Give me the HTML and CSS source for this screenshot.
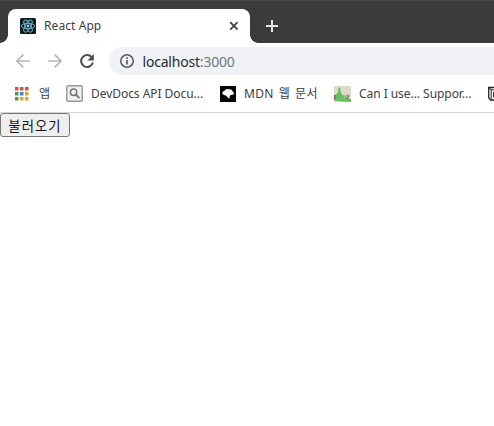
FILE: index.html
```html
<!DOCTYPE html>
<html lang="ko">
<head>
<meta charset="utf-8">
<title>React App</title>
<link rel="stylesheet" href="styles.css">
</head>
<body>
<header class="tabs">
  <div class="tab">
    <svg class="favicon" width="16" height="16" viewBox="0 0 16 16"><rect width="16" height="16" rx="1.5" fill="#101820"/><g fill="none" stroke="#72b9d2" stroke-width=".9"><ellipse cx="8" cy="8" rx="6.8" ry="2.7"/><ellipse cx="8" cy="8" rx="6.8" ry="2.7" transform="rotate(60 8 8)"/><ellipse cx="8" cy="8" rx="6.8" ry="2.7" transform="rotate(120 8 8)"/></g><circle cx="8" cy="8" r="1.4" fill="#8cd0e5"/></svg>
    <span class="tab-title">React App</span>
    <svg class="close" width="10" height="10" viewBox="0 0 10 10"><path d="M1.2 1.2l7.4 7.4M8.6 1.2L1.2 8.6" stroke="#3c4043" stroke-width="1.7"/></svg>
  </div>
  <svg class="plus" width="14" height="14" viewBox="0 0 14 14"><path d="M7 1v12M1 7h12" stroke="#e8e8e8" stroke-width="2"/></svg>
</header>
<nav class="toolbar">
  <svg width="16" height="16" viewBox="0 0 16 16"><path d="M15 8H2M8.3 1.6L1.9 8l6.4 6.4" fill="none" stroke="#b5b6b8" stroke-width="1.7"/></svg>
  <svg width="16" height="16" viewBox="0 0 16 16"><path d="M1 8h13M7.7 1.6L14.1 8l-6.4 6.4" fill="none" stroke="#b5b6b8" stroke-width="1.7"/></svg>
  <svg width="16" height="16" viewBox="0 0 16 16"><path d="M12.7 4.1A6 6 0 1 0 13.9 9.6" fill="none" stroke="#4b4e52" stroke-width="2"/><path d="M14.8 1v6.4H8.4z" fill="#4b4e52"/></svg>
  <div class="address">
    <svg width="16" height="16" viewBox="0 0 16 16"><circle cx="8" cy="8" r="6.2" fill="none" stroke="#55585c" stroke-width="1.5"/><path d="M8 7v4.5M8 4.3v1.6" stroke="#55585c" stroke-width="1.6"/></svg>
    <span class="url">localhost<span class="port">:3000</span></span>
  </div>
</nav>
<nav class="bookmarks">
  <a class="mark apps"><svg width="14" height="14" viewBox="0 0 14 14"><path d="M0 0h3.5v3.5H0zM5 0h3.5v3.5H5zM10 0h3.5v3.5H10z" fill="#d5503f"/><path d="M0 5h3.5v3.5H0z" fill="#47975a"/><path d="M5 5h3.5v3.5H5z" fill="#4280d2"/><path d="M10 5h3.5v3.5H10zM5 10h3.5v3.5H5zM10 10h3.5v3.5H10z" fill="#dda42e"/><path d="M0 10h3.5v3.5H0z" fill="#47975a"/></svg><span>앱</span></a>
  <a class="mark devdocs"><svg width="17" height="17" viewBox="0 0 17 17"><rect x=".75" y=".75" width="15.5" height="15.5" rx="1.5" fill="#f1f1f1" stroke="#969696" stroke-width="1.4"/><circle cx="7.6" cy="7.2" r="3.2" fill="none" stroke="#777" stroke-width="1.5"/><path d="M10 9.7l3.4 3.4" stroke="#777" stroke-width="2"/></svg><span>DevDocs API Docu...</span></a>
  <a class="mark mdn"><svg width="16" height="16" viewBox="0 0 16 16"><path d="M0 0h16v16H0z" fill="#050505"/><path d="M2.2 7.4Q2.6 5 4.8 4.6 6.4 2.6 8.6 3.3 12 3 12.6 5.2L14 7l-.5 1.6-3 .4-.8 1.5-.1 2.3-2-1.2L6 9.4 3.8 9z" fill="#fff"/></svg><span>MDN 웹 문서</span></a>
  <a class="mark caniuse"><svg width="17" height="16" viewBox="0 0 17 16"><path d="M0 0h17v16H0z" fill="#dedbce"/><path d="M0 9h2v5H0zM12 11h2v3h-2z" fill="#b85a50"/><path d="M1 15l1-6 2-3 .5-5 1.7 1 .8 5 2 2 1 3 2-2 1 3 1-4h1v4h2v3z" fill="#69bd62"/><path d="M9 10h7M14 8v6" stroke="#879571"/></svg><span>Can I use... Suppor...</span></a>
  <a class="mark last"><svg width="16" height="16" viewBox="0 0 16 16"><path d="M.7 1.5h10.5l4 3V14H2.6L.7 11.8z" fill="#fff" stroke="#222" stroke-width="1.3"/><path d="M.7 1.5l2.5 2.3h11M3.2 3.8V14M5.5 11.5V6.5l5 5v-5" fill="none" stroke="#333" stroke-width="1.1"/></svg></a>
</nav>
<main><button class="load">불러오기</button></main>
</body>
</html>
```
FILE: styles.css
```css
* { box-sizing: border-box; }
body { margin: 0; height: 426px; overflow: hidden; background: #fff; color: #3c4043; font: 12px "Noto Sans", "Noto Sans CJK KR", sans-serif; }
svg { display: block; flex: none; }
span { white-space: nowrap; }
.tabs { height: 43px; padding: 8px 0 0 8px; display: flex; background: #3b3b3b; border-top: 1px solid #484848; }
.tab { position: relative; width: 242px; height: 34px; padding: 0 11px 0 12px; display: flex; align-items: center; background: #fff; border-radius: 8px 8px 0 0; }
.tab::before, .tab::after { content: ""; position: absolute; bottom: 0; width: 8px; height: 8px; }
.tab::before { left: -8px; background: radial-gradient(circle at 0 0, transparent 7.5px, #fff 8px); }
.tab::after { right: -8px; background: radial-gradient(circle at 100% 0, transparent 7.5px, #fff 8px); }
.tab-title { margin-left: 8px; padding-bottom: 2px; letter-spacing: .08px; }
.close { margin-left: auto; }
.plus { margin: 10px 0 0 15px; }
.toolbar { height: 36px; padding-left: 14.5px; display: flex; align-items: center; gap: 16px; }
.address { height: 28px; flex: 1; margin-left: -2px; padding-left: 10px; display: flex; align-items: center; gap: 8px; background: #f0f2f5; border-radius: 14px 0 0 14px; }
.url { color: #26292c; font-size: 14px; letter-spacing: -.2px; }
.port { color: #74777b; }
.bookmarks { height: 34px; padding: 0 0 4px 15px; display: flex; align-items: center; border-bottom: 1px solid #d5d5d5; overflow: hidden; }
.mark { display: flex; align-items: center; gap: 8px; flex: none; }
.apps { width: 51px; gap: 10px; }
.apps span, .mdn span { padding-bottom: 2px; }
.devdocs { width: 154px; letter-spacing: -.05px; }
.mdn { width: 114px; }
.mdn span { letter-spacing: .3px; word-spacing: 1.6px; }
.caniuse { width: 154px; letter-spacing: -.05px; }
.load { display: block; width: 70px; height: 24px; padding: 2px 0 0; border: 1px solid #767676; border-radius: 3px; background: #efefef; color: #111; font: 13.33px "Noto Sans CJK KR", sans-serif; line-height: 20px; letter-spacing: 1.1px; }
```
